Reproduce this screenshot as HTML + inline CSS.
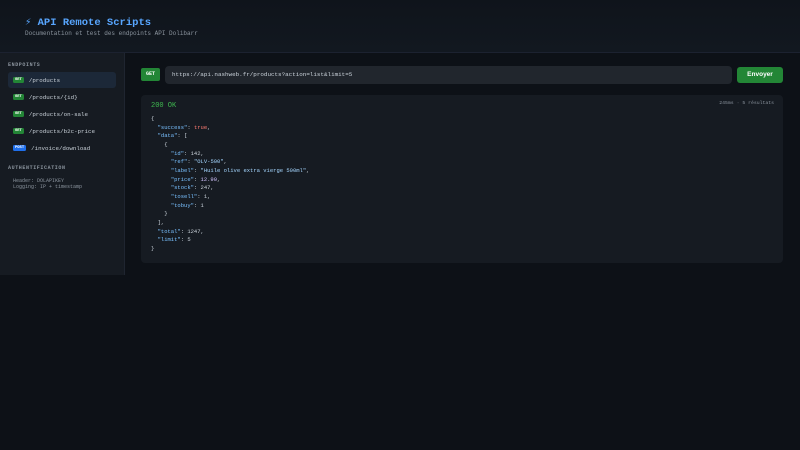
<!DOCTYPE html>
<html><head><meta charset="utf-8"><style>
*{margin:0;padding:0;box-sizing:border-box}
body{width:800px;height:450px;background:#0d1117;font-family:"Liberation Mono",monospace;color:#c9d1d9;position:relative;overflow:hidden}
.hdr{position:absolute;left:0;top:0;width:800px;height:53px;background:linear-gradient(180deg,#0f141b,#121820);border-bottom:1px solid #1c2230}
.t{position:absolute;left:25px;top:16px;font-size:10.5px;font-weight:bold;color:#58a6ff}
.st{position:absolute;left:25px;top:30px;font-size:6px;color:#8b949e}
.side{position:absolute;left:0;top:53px;width:125px;height:222px;background:#161b22;border-right:1px solid #1f2530}
.sec{position:absolute;left:8px;font-size:5px;letter-spacing:.6px;color:#8b949e;font-weight:bold}
.it{position:absolute;left:8px;width:108px;height:16px;border-radius:3px;font-size:5.8px;color:#c9d1d9;display:flex;align-items:center;padding-left:5px}
.it.a{background:#1c2838}
.b{display:inline-block;font-size:3.8px;font-weight:bold;color:#fff;background:#238636;border-radius:1.5px;padding:1px 2px;margin-right:5px;line-height:4px}
.b.p{background:#1f6feb}
.auth{position:absolute;left:13px;top:178px;font-size:5px;color:#8b949e;line-height:6px}
.get{position:absolute;left:141px;top:68px;width:19px;height:13px;background:#238636;border-radius:2px;color:#fff;font-size:5px;font-weight:bold;text-align:center;line-height:13px}
.url{position:absolute;left:165px;top:66px;width:567px;height:18px;background:#21262d;border-radius:4px;font-size:5.9px;color:#c9d1d9;line-height:18px;padding-left:7px}
.btn{position:absolute;left:737px;top:67px;width:46px;height:16px;background:#238636;border-radius:3px;color:#fff;font-family:"Liberation Sans",sans-serif;font-weight:bold;font-size:6.5px;text-align:center;line-height:16px}
.resp{position:absolute;left:141px;top:95px;width:642px;height:168px;background:#161b22;border-radius:4px}
.ok{position:absolute;left:10px;top:7px;font-size:7px;color:#3fb950}
.meta{position:absolute;right:9px;top:6px;font-size:4.8px;color:#8b949e}
pre{position:absolute;left:10px;top:20px;font-family:"Liberation Mono",monospace;font-size:5.5px;line-height:8.65px;color:#c9d1d9}
.k{color:#79c0ff}.s{color:#a5d6ff}.n{color:#d2c3ff}.tr{color:#ff7b72}
</style></head><body>
<div class="hdr"><div class="t">⚡ API Remote Scripts</div><div class="st">Documentation et test des endpoints API Dolibarr</div></div>
<div class="side">
<div class="sec" style="top:9px">ENDPOINTS</div>
<div class="it a" style="top:19px"><span class="b">GET</span>/products</div>
<div class="it" style="top:36px"><span class="b">GET</span>/products/{id}</div>
<div class="it" style="top:53px"><span class="b">GET</span>/products/on-sale</div>
<div class="it" style="top:70px"><span class="b">GET</span>/products/b2c-price</div>
<div class="it" style="top:87px"><span class="b p">POST</span>/invoice/download</div>
<div class="sec" style="top:112px">AUTHENTIFICATION</div>
</div>
<div class="auth">Header: DOLAPIKEY<br>Logging: IP + timestamp</div>
<div class="get">GET</div>
<div class="url">https://api.nashweb.fr/products?action=list&amp;limit=5</div>
<div class="btn">Envoyer</div>
<div class="resp"><div class="ok">200 OK</div><div class="meta">245ms · 5 résultats</div>
<pre>{
  <span class="k">"success"</span>: <span class="tr">true</span>,
  <span class="k">"data"</span>: [
    {
      <span class="k">"id"</span>: 142,
      <span class="k">"ref"</span>: <span class="s">"OLV-500"</span>,
      <span class="k">"label"</span>: <span class="s">"Huile olive extra vierge 500ml"</span>,
      <span class="k">"price"</span>: <span class="n">12.90</span>,
      <span class="k">"stock"</span>: 247,
      <span class="k">"tosell"</span>: 1,
      <span class="k">"tobuy"</span>: 1
    }
  ],
  <span class="k">"total"</span>: 1247,
  <span class="k">"limit"</span>: 5
}</pre></div>
</body></html>
